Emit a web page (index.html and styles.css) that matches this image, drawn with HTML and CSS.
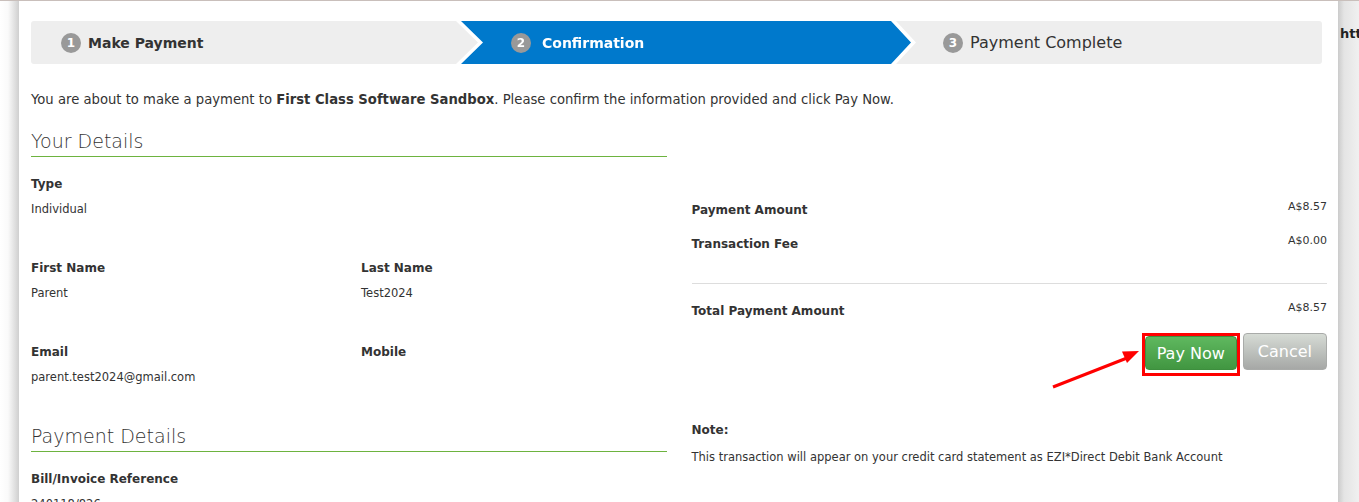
FILE: index.html
```html
<!DOCTYPE html>
<html lang="en">
<head>
    <meta charset="UTF-8">
    <meta name="viewport" content="width=device-width, initial-scale=1.0">
    <title>Confirm Payment</title>
    <link rel="stylesheet" href="styles.css">
</head>
<body>
    <div class="page">
        <div class="gutter gutter-left"></div>

        <main class="panel">
            <div class="steps">
                <div class="step step-first"><span class="step-num">1</span>Make Payment</div>
                <div class="step step-active">
                    <div class="step-shape"><span class="step-num">2</span>Confirmation</div>
                </div>
                <div class="step step-last"><span class="step-num">3</span>Payment Complete</div>
            </div>

            <p class="intro">You are about to make a payment to <strong>First Class Software Sandbox</strong>. Please confirm the information provided and click Pay Now.</p>

            <div class="columns">
                <section class="details">
                    <h2>Your Details</h2>
                    <div class="fields">
                        <div class="field field-wide">
                            <div class="label">Type</div>
                            <div class="value">Individual</div>
                        </div>
                        <div class="field">
                            <div class="label">First Name</div>
                            <div class="value">Parent</div>
                        </div>
                        <div class="field">
                            <div class="label">Last Name</div>
                            <div class="value">Test2024</div>
                        </div>
                        <div class="field">
                            <div class="label">Email</div>
                            <div class="value">parent.test2024@gmail.com</div>
                        </div>
                        <div class="field">
                            <div class="label">Mobile</div>
                            <div class="value"></div>
                        </div>
                    </div>

                    <h2>Payment Details</h2>
                    <div class="fields">
                        <div class="field field-wide">
                            <div class="label">Bill/Invoice Reference</div>
                            <div class="value">240118/826</div>
                        </div>
                    </div>
                </section>

                <section class="summary">
                    <div class="amount-row">
                        <div class="label">Payment Amount</div>
                        <div class="amount">A$8.57</div>
                    </div>
                    <div class="amount-row">
                        <div class="label">Transaction Fee</div>
                        <div class="amount">A$0.00</div>
                    </div>
                    <hr class="divider">
                    <div class="amount-row amount-total">
                        <div class="label">Total Payment Amount</div>
                        <div class="amount">A$8.57</div>
                    </div>

                    <div class="actions">
                        <svg class="pointer" width="100" height="50" viewBox="0 0 100 50">
                            <line x1="7" y1="42" x2="81" y2="13" stroke="#f00" stroke-width="3"/>
                            <polygon points="93,6 76,6.5 81,18" fill="#f00"/>
                        </svg>
                        <span class="pay-box"><button class="btn btn-pay">Pay Now</button></span>
                        <button class="btn btn-cancel">Cancel</button>
                    </div>

                    <div class="note">
                        <div class="label">Note:</div>
                        <div class="value">This transaction will appear on your credit card statement as EZI*Direct Debit Bank Account</div>
                    </div>
                </section>
            </div>
        </main>

        <div class="gutter gutter-right">https://</div>
    </div>
</body>
</html>
```

FILE: styles.css
```css
html, body {
    overflow: hidden;
}

body {
    margin: 0;
    border-top: 1px solid #c9bfbb;
    font-family: "DejaVu Sans", sans-serif;
    color: #333;
    background-color: #fff;
}

.page {
    display: flex;
    min-height: 100vh;
}

.gutter {
    flex: none;
}

.gutter-left {
    width: 19px;
    background: linear-gradient(90deg, #fff 0, #fafafa 8px, #cfcfcf 100%);
}

.gutter-right {
    flex: 1;
    overflow: hidden;
    white-space: nowrap;
    padding: 24px 0 0 2px;
    font-size: 13px;
    font-weight: bold;
    line-height: 18px;
    color: #222;
    background: linear-gradient(90deg, #cbcbcb 0, #e4e4e4 6px, #f0f0f0 100%);
}

.panel {
    flex: none;
    width: 1319px;
    box-sizing: border-box;
    padding: 20px 11px 40px 12px;
    background: white;
}

/* progress steps */
.steps {
    display: flex;
    height: 43px;
    margin-right: 5px;
    background-color: #eee;
    border-radius: 3px;
    font-size: 14px;
    font-weight: bold;
    color: #333;
}

.step {
    display: flex;
    align-items: center;
    box-sizing: border-box;
}

.step-first {
    width: 430px;
    padding-left: 30px;
}

.step-active {
    position: relative;
    z-index: 1;
    width: 450px;
    margin-right: -20px;
    filter: drop-shadow(5px 0 0 #fff) drop-shadow(-5px 0 0 #fff);
}

.step-shape {
    display: flex;
    align-items: center;
    width: 100%;
    height: 100%;
    box-sizing: border-box;
    padding-left: 50px;
    background-color: #0079cc;
    color: white;
    clip-path: polygon(0 0, calc(100% - 20px) 0, 100% 50%, calc(100% - 20px) 100%, 0 100%, 22px 50%);
}

.step-shape .step-num {
    margin-right: 11px;
}

.step-last {
    flex: 1;
    padding-left: 52px;
    font-size: 16px;
    font-weight: normal;
}

.step-num {
    display: inline-flex;
    align-items: center;
    justify-content: center;
    width: 20px;
    height: 20px;
    margin-right: 7px;
    border-radius: 50%;
    background-color: #999;
    color: white;
    font-size: 12px;
    font-weight: bold;
}

.intro {
    margin: 27px 0 0;
    font-size: 13.2px;
    line-height: 18px;
}

/* two columns */
.columns {
    display: grid;
    grid-template-columns: 1fr 1fr;
    column-gap: 25px;
    margin-top: 20px;
}

h2 {
    margin: 0;
    padding-bottom: 3px;
    border-bottom: 1px solid #6db33f;
    font-size: 19px;
    font-weight: 300;
    line-height: 24px;
    color: #333;
}

.fields {
    display: grid;
    grid-template-columns: 330px 1fr;
    row-gap: 42px;
    padding: 18px 0 39px;
}

.field-wide {
    grid-column: 1 / -1;
}

.label {
    font-size: 12px;
    font-weight: bold;
    line-height: 18px;
}

.value {
    min-height: 16px;
    margin-top: 8px;
    font-size: 11.5px;
    line-height: 16px;
}

.summary {
    padding-top: 72px;
}

.amount-row {
    display: flex;
    justify-content: space-between;
    align-items: flex-start;
    margin-bottom: 16px;
}

.amount {
    font-size: 11px;
    line-height: 12px;
}

.divider {
    margin: 30px 0 0;
    border: none;
    border-top: 1px solid #ddd;
}

.amount-total {
    margin: 18px 0 0;
}

.actions {
    position: relative;
    display: flex;
    justify-content: flex-end;
    align-items: flex-start;
    gap: 3px;
    margin-top: 13px;
}

.pointer {
    position: absolute;
    left: 354px;
    top: 12px;
}

.btn {
    height: 37px;
    box-sizing: border-box;
    padding: 0 11px;
    border: 1px solid;
    border-radius: 4px;
    font-family: inherit;
    font-size: 16px;
    color: white;
    cursor: pointer;
}

.pay-box {
    display: inline-flex;
    padding-bottom: 3px;
    border: 3px solid #f00;
}

.btn-pay {
    height: 34px;
    border-color: #3e8f3e;
    background: linear-gradient(#5fb85f, #419641);
}

.btn-cancel {
    padding: 0 14px;
    border-color: #a9aba9;
    background: linear-gradient(#d6dbd5, #a6a8a6);
}

.note {
    margin-top: 45px;
}

.note .value {
    margin-top: 10px;
}
```
